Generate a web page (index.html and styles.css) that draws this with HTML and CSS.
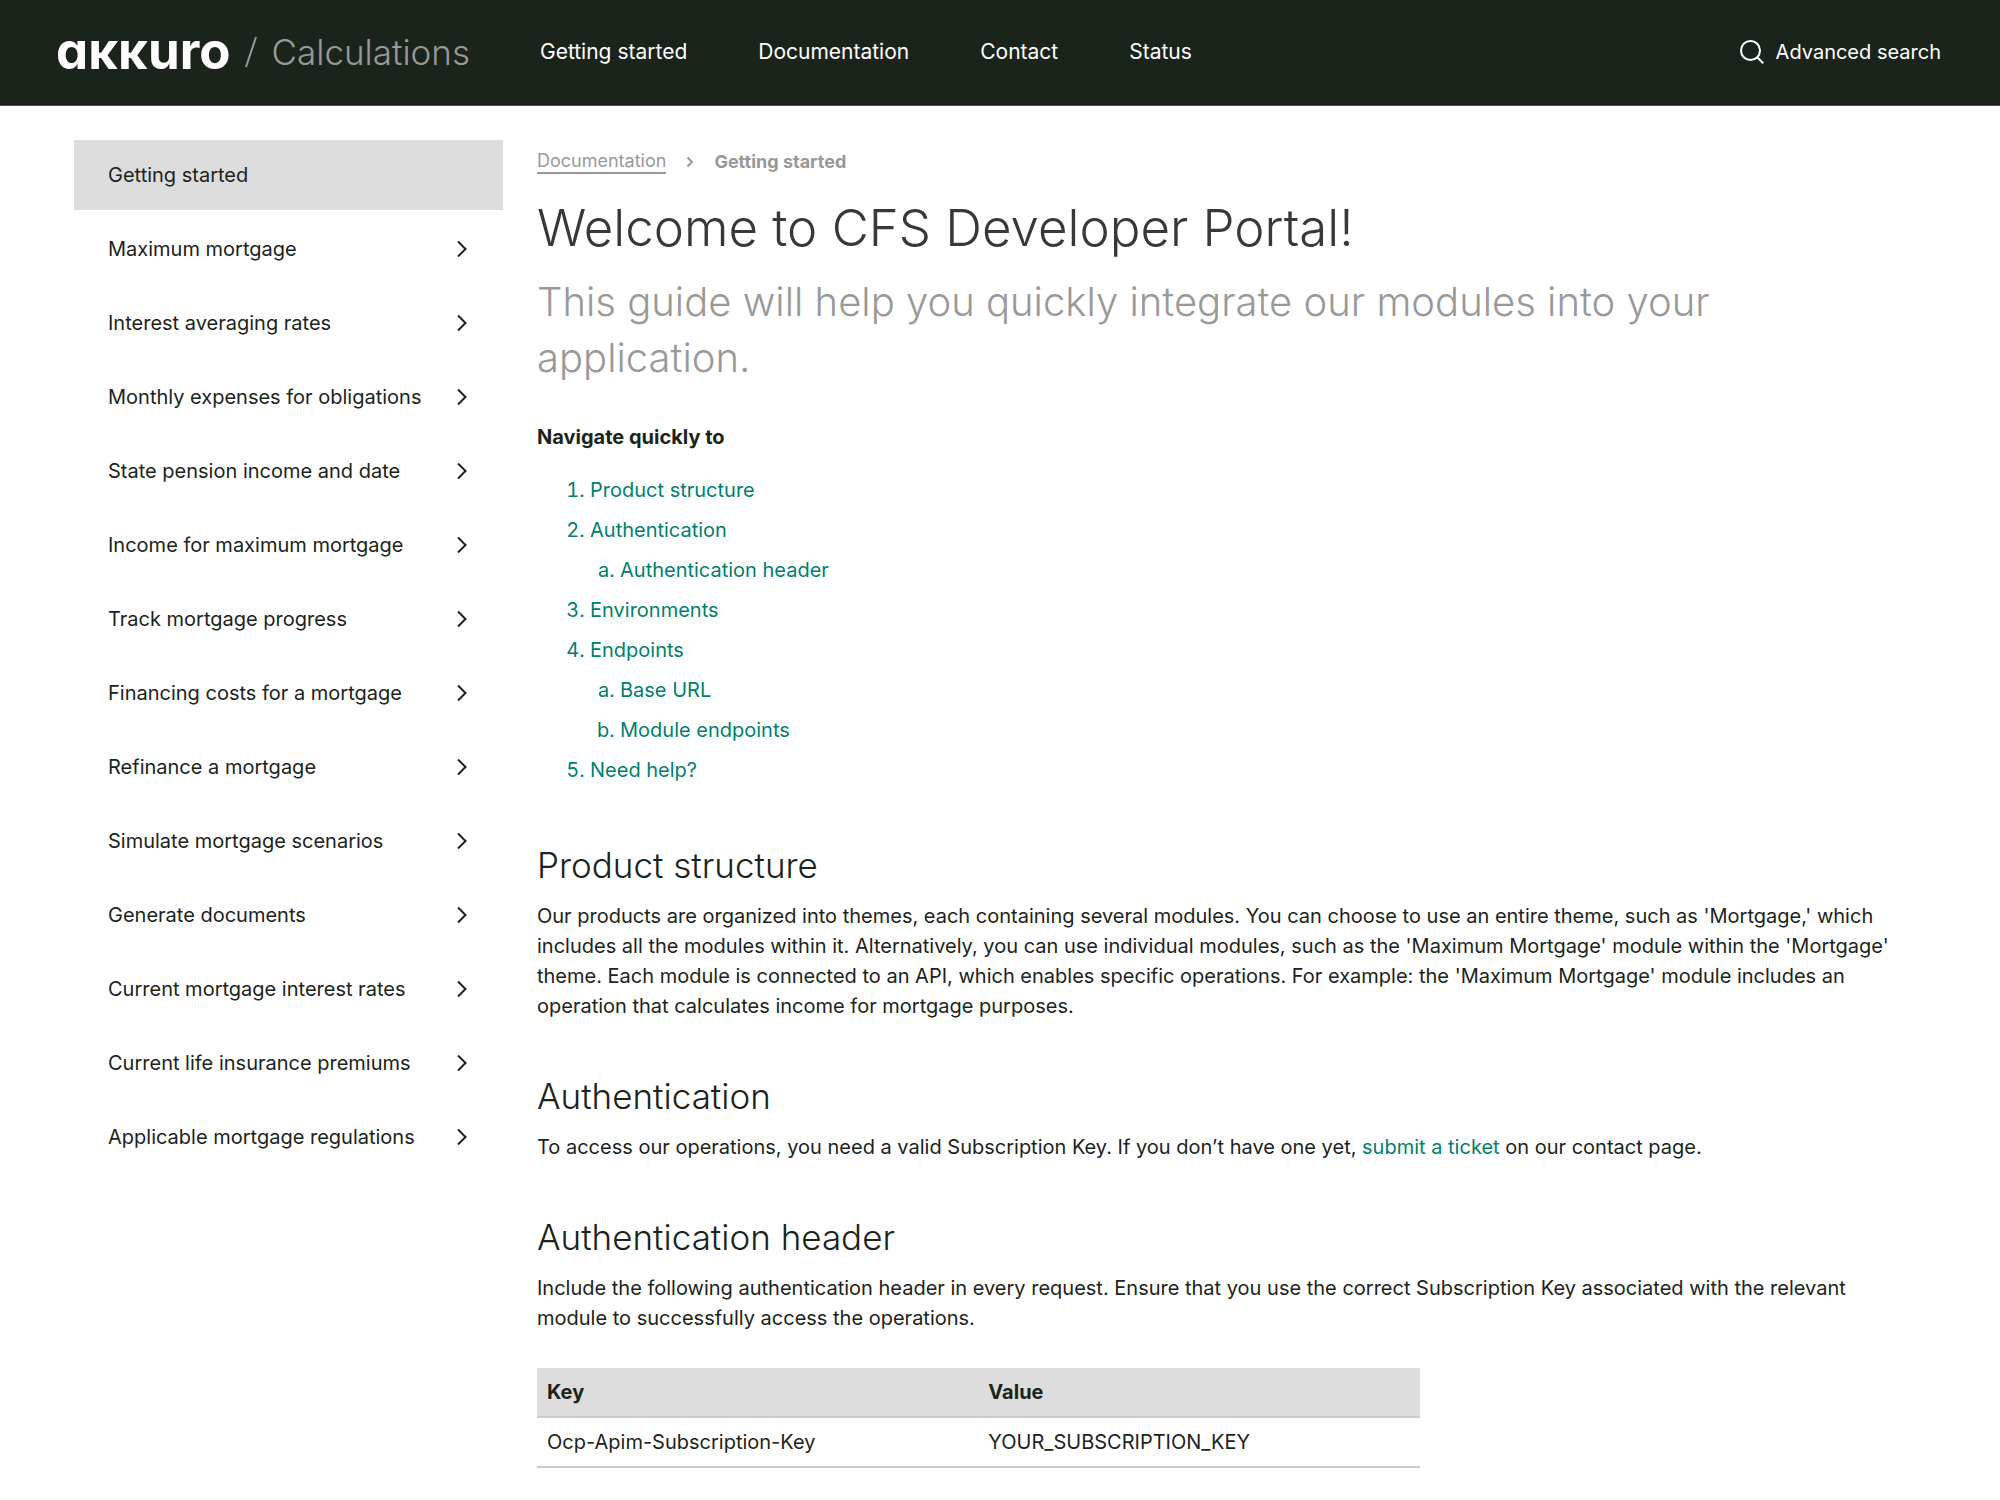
FILE: index.html
```html
<!DOCTYPE html>
<html lang="en">
<head>
    <meta charset="UTF-8">
    <meta name="viewport" content="width=device-width, initial-scale=1.0">
    <title>Getting started - Akkuro Calculations</title>
    <link rel="stylesheet" href="styles.css">
</head>
<body>
    <!-- Chevron shared by the menu and the breadcrumb -->
    <svg class="sprite" aria-hidden="true">
        <symbol id="chevron" viewBox="0 0 12 18">
            <path d="M1 1.5 L8.5 9 L1 16.5" fill="none" stroke="currentColor" stroke-width="2"/>
        </symbol>
        <symbol id="crumb" viewBox="0 0 8 12">
            <path d="M1.5 1.5 L6 6 L1.5 10.5" fill="none" stroke="currentColor" stroke-width="2"/>
        </symbol>
    </svg>

    <header class="header">
        <a class="brand" href="#">
            <span class="logo" aria-label="akkuro">aĸĸuro</span>
            <svg class="slash" viewBox="0 0 12 32" aria-hidden="true"><path d="M1 31 L11 1" stroke="currentColor" stroke-width="2"/></svg>
            <span class="product">Calculations</span>
        </a>
        <nav class="main-nav">
            <a href="#">Getting started</a>
            <a href="#">Documentation</a>
            <a href="#">Contact</a>
            <a href="#">Status</a>
        </nav>
        <a class="search" href="#">
            <svg class="search-icon" viewBox="0 0 24 24" aria-hidden="true">
                <g fill="none" stroke="currentColor" stroke-width="2"><circle cx="10.5" cy="10.5" r="9.5"/><path d="M17 17 L23.2 23.2"/></g>
            </svg>
            Advanced search
        </a>
    </header>

    <div class="page">
        <!-- Side menu -->
        <nav class="side-menu">
            <a class="active" href="#">Getting started</a>
            <a href="#">Maximum mortgage <svg class="chevron"><use href="#chevron"/></svg></a>
            <a href="#">Interest averaging rates <svg class="chevron"><use href="#chevron"/></svg></a>
            <a href="#">Monthly expenses for obligations <svg class="chevron"><use href="#chevron"/></svg></a>
            <a href="#">State pension income and date <svg class="chevron"><use href="#chevron"/></svg></a>
            <a href="#">Income for maximum mortgage <svg class="chevron"><use href="#chevron"/></svg></a>
            <a href="#">Track mortgage progress <svg class="chevron"><use href="#chevron"/></svg></a>
            <a href="#">Financing costs for a mortgage <svg class="chevron"><use href="#chevron"/></svg></a>
            <a href="#">Refinance a mortgage <svg class="chevron"><use href="#chevron"/></svg></a>
            <a href="#">Simulate mortgage scenarios <svg class="chevron"><use href="#chevron"/></svg></a>
            <a href="#">Generate documents <svg class="chevron"><use href="#chevron"/></svg></a>
            <a href="#">Current mortgage interest rates <svg class="chevron"><use href="#chevron"/></svg></a>
            <a href="#">Current life insurance premiums <svg class="chevron"><use href="#chevron"/></svg></a>
            <a href="#">Applicable mortgage regulations <svg class="chevron"><use href="#chevron"/></svg></a>
        </nav>

        <!-- Content -->
        <main class="content">
            <div class="breadcrumb">
                <a href="#">Documentation</a>
                <svg class="crumb-chevron"><use href="#crumb"/></svg>
                <strong>Getting started</strong>
            </div>

            <h1>Welcome to CFS Developer Portal!</h1>
            <p class="lead">This guide will help you quickly integrate our modules into your application.</p>

            <p class="toc-title">Navigate quickly to</p>
            <ol class="toc">
                <li><a href="#product-structure">Product structure</a></li>
                <li><a href="#authentication">Authentication</a>
                    <ol>
                        <li><a href="#authentication-header">Authentication header</a></li>
                    </ol>
                </li>
                <li><a href="#">Environments</a></li>
                <li><a href="#">Endpoints</a>
                    <ol>
                        <li><a href="#">Base URL</a></li>
                        <li><a href="#">Module endpoints</a></li>
                    </ol>
                </li>
                <li><a href="#">Need help?</a></li>
            </ol>

            <section id="product-structure">
                <h2>Product structure</h2>
                <p>Our products are organized into themes, each containing several modules. You can choose to use an entire theme, such as 'Mortgage,' which includes all the modules within it. Alternatively, you can use individual modules, such as the 'Maximum Mortgage' module within the 'Mortgage' theme. Each module is connected to an API, which enables specific operations. For example: the 'Maximum Mortgage' module includes an operation that calculates income for mortgage purposes.</p>
            </section>

            <section id="authentication">
                <h2>Authentication</h2>
                <p>To access our operations, you need a valid Subscription Key. If you don’t have one yet, <a href="#">submit a ticket</a> on our contact page.</p>
            </section>

            <section id="authentication-header">
                <h2>Authentication header</h2>
                <p>Include the following authentication header in every request. Ensure that you use the correct Subscription Key associated with the relevant module to successfully access the operations.</p>
                <table>
                    <thead>
                        <tr><th>Key</th><th>Value</th></tr>
                    </thead>
                    <tbody>
                        <tr><td>Ocp-Apim-Subscription-Key</td><td>YOUR_SUBSCRIPTION_KEY</td></tr>
                    </tbody>
                </table>
            </section>
        </main>
    </div>
</body>
</html>
```
FILE: styles.css
```css
* {
    box-sizing: border-box;
}

body {
    margin: 0;
    font-family: Inter, "Liberation Sans", sans-serif;
    font-size: 20px;
    line-height: 30px;
    color: #1b241b;
    background-color: #ffffff;
}

a {
    color: #00806e;
    text-decoration: none;
}

.sprite {
    display: none;
}

/* Header */
.header {
    display: flex;
    align-items: center;
    min-height: 106px;
    padding: 0 59px 2px 56px;
    background-color: #1b241b;
    border-bottom: 1px solid #4d544c;
}

.header a {
    color: #ffffff;
}

.brand {
    display: flex;
    align-items: center;
    margin-right: 70px;
}

.logo {
    font-size: 51px;
    font-weight: 700;
    line-height: 52px;
    padding-bottom: 2px;
    font-feature-settings: "cv11";
}

.slash {
    width: 12px;
    height: 32px;
    margin: 0 15px 0 14px;
    color: #999999;
}

.product {
    font-size: 35px;
    font-weight: 300;
    color: #999999;
}

.main-nav {
    display: flex;
    gap: 71px;
    font-size: 21px;
}

.search {
    display: flex;
    align-items: center;
    gap: 12px;
    margin-left: auto;
}

.search-icon {
    width: 24px;
    height: 24px;
}

/* Page layout */
.page {
    display: flex;
    gap: 34px;
    padding: 34px 105px 24px 74px;
}

.side-menu {
    flex: 0 0 429px;
}

.side-menu a {
    display: flex;
    justify-content: space-between;
    align-items: center;
    padding: 22px 34px;
    color: #1b241b;
}

.side-menu .active {
    margin-bottom: 2px;
    padding: 20px 34px;
    background-color: #dddddd;
}

.chevron {
    width: 12px;
    height: 18px;
}

.content {
    flex: 1;
    min-width: 0;
}

/* Breadcrumb */
.breadcrumb {
    display: flex;
    align-items: center;
    gap: 20px;
    padding-top: 10px;
    font-size: 18px;
    line-height: 24px;
    color: #999999;
}

.breadcrumb a {
    color: #999999;
    border-bottom: 2px solid #999999;
    line-height: 22px;
}

.crumb-chevron {
    width: 8px;
    height: 12px;
}

/* Text */
h1 {
    margin: 22px 0 14px;
    font-size: 51px;
    font-weight: 300;
    line-height: 64px;
    color: #383838;
}

.lead {
    margin: 0 0 36px;
    font-size: 40px;
    font-weight: 300;
    line-height: 56px;
    color: #999999;
}

.toc-title {
    margin: 0 0 18px;
    font-weight: 700;
}

.toc {
    margin: 0;
    padding-left: 53px;
    line-height: 40px;
    color: #00806e;
}

.toc ol {
    padding-left: 30px;
    list-style-type: lower-alpha;
}

section {
    padding-top: 50px;
}

h2 {
    margin: 0 0 11px;
    font-size: 35px;
    font-weight: 300;
    line-height: 50px;
}

section p {
    margin: 0;
}

/* Table */
table {
    width: 65%;
    margin-top: 35px;
    border-collapse: collapse;
    table-layout: fixed;
}

th,
td {
    padding: 9px 10px;
    text-align: left;
    border-bottom: 2px solid #cccccc;
}

th {
    background-color: #dddddd;
}
```
